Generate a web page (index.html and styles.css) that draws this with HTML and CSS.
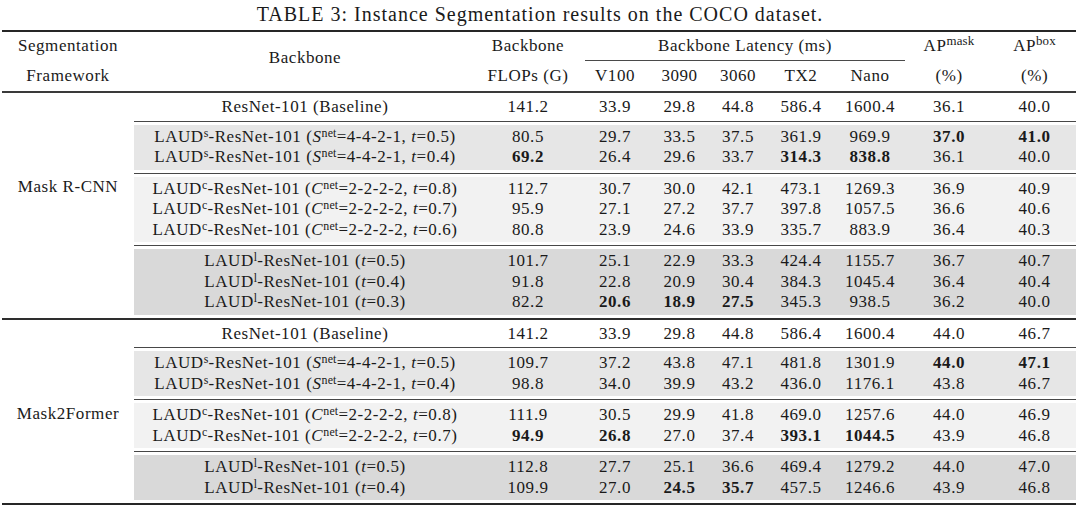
FILE: index.html
```html
<!DOCTYPE html>
<html lang="en">
<head>
<meta charset="utf-8">
<title>TABLE 3</title>
<link rel="stylesheet" href="styles.css">
</head>
<body>
<div class="caption">TABLE 3: Instance Segmentation results on the COCO dataset.</div>
<table class="results">
  <colgroup>
    <col class="c-fw"><col class="c-bb"><col class="c-fl"><col class="c-v100"><col class="c-3090"><col class="c-3060"><col class="c-tx2"><col class="c-nano"><col class="c-apm"><col class="c-apb">
  </colgroup>
  <thead>
    <tr class="h1">
      <th>Segmentation</th>
      <th rowspan="2" class="bb-head">Backbone</th>
      <th>Backbone</th>
      <th colspan="5" class="lat"><div class="cmid">Backbone Latency (ms)</div></th>
      <th>AP<sup>mask</sup></th>
      <th>AP<sup>box</sup></th>
    </tr>
    <tr class="h2">
      <th>Framework</th>
      <th>FLOPs (G)</th>
      <th>V100</th><th>3090</th><th>3060</th><th>TX2</th><th>Nano</th>
      <th>(%)</th><th>(%)</th>
    </tr>
  </thead>
  <tbody class="fw">
    <tr class="base">
      <td rowspan="13" class="fw-name">Mask R-CNN</td>
      <td>ResNet-101 (Baseline)</td><td>141.2</td><td>33.9</td><td>29.8</td><td>44.8</td><td>586.4</td><td>1600.4</td><td>36.1</td><td>40.0</td>
    </tr>
    <tr class="sep"><td colspan="9"></td></tr>
    <tr class="g-s first">
      <td>LAUD<sup>s</sup>-ResNet-101 (<i>S</i><sup>net</sup>=4-4-2-1, <i>t</i>=0.5)</td><td>80.5</td><td>29.7</td><td>33.5</td><td>37.5</td><td>361.9</td><td>969.9</td><td><b>37.0</b></td><td><b>41.0</b></td>
    </tr>
    <tr class="g-s last">
      <td>LAUD<sup>s</sup>-ResNet-101 (<i>S</i><sup>net</sup>=4-4-2-1, <i>t</i>=0.4)</td><td><b>69.2</b></td><td>26.4</td><td>29.6</td><td>33.7</td><td><b>314.3</b></td><td><b>838.8</b></td><td>36.1</td><td>40.0</td>
    </tr>
    <tr class="sep"><td colspan="9"></td></tr>
    <tr class="g-c first">
      <td>LAUD<sup>c</sup>-ResNet-101 (<i>C</i><sup>net</sup>=2-2-2-2, <i>t</i>=0.8)</td><td>112.7</td><td>30.7</td><td>30.0</td><td>42.1</td><td>473.1</td><td>1269.3</td><td>36.9</td><td>40.9</td>
    </tr>
    <tr class="g-c">
      <td>LAUD<sup>c</sup>-ResNet-101 (<i>C</i><sup>net</sup>=2-2-2-2, <i>t</i>=0.7)</td><td>95.9</td><td>27.1</td><td>27.2</td><td>37.7</td><td>397.8</td><td>1057.5</td><td>36.6</td><td>40.6</td>
    </tr>
    <tr class="g-c last">
      <td>LAUD<sup>c</sup>-ResNet-101 (<i>C</i><sup>net</sup>=2-2-2-2, <i>t</i>=0.6)</td><td>80.8</td><td>23.9</td><td>24.6</td><td>33.9</td><td>335.7</td><td>883.9</td><td>36.4</td><td>40.3</td>
    </tr>
    <tr class="sep"><td colspan="9"></td></tr>
    <tr class="g-l first">
      <td>LAUD<sup>l</sup>-ResNet-101 (<i>t</i>=0.5)</td><td>101.7</td><td>25.1</td><td>22.9</td><td>33.3</td><td>424.4</td><td>1155.7</td><td>36.7</td><td>40.7</td>
    </tr>
    <tr class="g-l">
      <td>LAUD<sup>l</sup>-ResNet-101 (<i>t</i>=0.4)</td><td>91.8</td><td>22.8</td><td>20.9</td><td>30.4</td><td>384.3</td><td>1045.4</td><td>36.4</td><td>40.4</td>
    </tr>
    <tr class="g-l last">
      <td>LAUD<sup>l</sup>-ResNet-101 (<i>t</i>=0.3)</td><td>82.2</td><td><b>20.6</b></td><td><b>18.9</b></td><td><b>27.5</b></td><td>345.3</td><td>938.5</td><td>36.2</td><td>40.0</td>
    </tr>
    <tr class="gap"><td colspan="9"></td></tr>
  </tbody>
  <tbody class="fw m2f">
    <tr class="base">
      <td rowspan="11" class="fw-name">Mask2Former</td>
      <td>ResNet-101 (Baseline)</td><td>141.2</td><td>33.9</td><td>29.8</td><td>44.8</td><td>586.4</td><td>1600.4</td><td>44.0</td><td>46.7</td>
    </tr>
    <tr class="sep"><td colspan="9"></td></tr>
    <tr class="g-s first">
      <td>LAUD<sup>s</sup>-ResNet-101 (<i>S</i><sup>net</sup>=4-4-2-1, <i>t</i>=0.5)</td><td>109.7</td><td>37.2</td><td>43.8</td><td>47.1</td><td>481.8</td><td>1301.9</td><td><b>44.0</b></td><td><b>47.1</b></td>
    </tr>
    <tr class="g-s last">
      <td>LAUD<sup>s</sup>-ResNet-101 (<i>S</i><sup>net</sup>=4-4-2-1, <i>t</i>=0.4)</td><td>98.8</td><td>34.0</td><td>39.9</td><td>43.2</td><td>436.0</td><td>1176.1</td><td>43.8</td><td>46.7</td>
    </tr>
    <tr class="sep"><td colspan="9"></td></tr>
    <tr class="g-c first">
      <td>LAUD<sup>c</sup>-ResNet-101 (<i>C</i><sup>net</sup>=2-2-2-2, <i>t</i>=0.8)</td><td>111.9</td><td>30.5</td><td>29.9</td><td>41.8</td><td>469.0</td><td>1257.6</td><td>44.0</td><td>46.9</td>
    </tr>
    <tr class="g-c last">
      <td>LAUD<sup>c</sup>-ResNet-101 (<i>C</i><sup>net</sup>=2-2-2-2, <i>t</i>=0.7)</td><td><b>94.9</b></td><td><b>26.8</b></td><td>27.0</td><td>37.4</td><td><b>393.1</b></td><td><b>1044.5</b></td><td>43.9</td><td>46.8</td>
    </tr>
    <tr class="sep"><td colspan="9"></td></tr>
    <tr class="g-l first">
      <td>LAUD<sup>l</sup>-ResNet-101 (<i>t</i>=0.5)</td><td>112.8</td><td>27.7</td><td>25.1</td><td>36.6</td><td>469.4</td><td>1279.2</td><td>44.0</td><td>47.0</td>
    </tr>
    <tr class="g-l last">
      <td>LAUD<sup>l</sup>-ResNet-101 (<i>t</i>=0.4)</td><td>109.9</td><td>27.0</td><td><b>24.5</b></td><td><b>35.7</b></td><td>457.5</td><td>1246.6</td><td>43.9</td><td>46.8</td>
    </tr>
    <tr class="gap"><td colspan="9"></td></tr>
  </tbody>
</table>
</body>
</html>
```
FILE: styles.css
```css
html, body {
  margin: 0;
  padding: 0;
  background: #ffffff;
}

body {
  width: 1080px;
  color: #1a1a1a;
  font-family: "Liberation Serif", "Times New Roman", serif;
}

.caption {
  height: 30px;
  line-height: 28px;
  text-align: center;
  font-size: 20px;
  letter-spacing: 1px;
}

.results {
  margin-left: 2px;
  width: 1074px;
  table-layout: fixed;
  border-collapse: collapse;
  border-top: 2px solid #262626;
  border-bottom: 2px solid #262626;
  font-size: 17px;
  letter-spacing: 0.55px;
}

.c-fw { width: 132px; }
.c-bb { width: 342px; }
.c-fl { width: 104px; }
.c-v100 { width: 70px; }
.c-3090 { width: 59px; }
.c-3060 { width: 58px; }
.c-tx2 { width: 68px; }
.c-nano { width: 70px; }
.c-apm { width: 88px; }
.c-apb { width: 83px; }

.results th,
.results td {
  padding: 0;
  text-align: center;
  vertical-align: middle;
  white-space: nowrap;
  font-weight: normal;
  line-height: 20.5px;
}

.results b { font-weight: bold; }

.results sup {
  font-size: 0.7em;
  line-height: 0;
  vertical-align: 0.42em;
  letter-spacing: 0.2px;
}

.results th sup {
  font-size: 0.76em;
  vertical-align: 0.45em;
}

thead {
  border-bottom: 2px solid #3a3a3a;
}

.h1 th { height: 29px; }
.h2 th { height: 30px; }

.results th.bb-head { padding-bottom: 6px; }

.results th.lat { vertical-align: bottom; }

.cmid {
  line-height: 28px;
  border-bottom: 1px solid #4a4a4a;
  margin: 0 0 0 5px;
}

.m2f { border-top: 2px solid #2e2e2e; }

.results td.fw-name {
  vertical-align: top;
  padding-top: 84px;
}

.base td { padding-top: 4px; }

.sep td {
  height: 7px;
  line-height: 0;
  font-size: 0;
  background: linear-gradient(#474747, #474747) no-repeat 0 3px / 100% 1px;
}

.gap td {
  height: 3px;
  line-height: 0;
  font-size: 0;
}

.g-s td { background: #e6e6e6; }
.g-c td { background: #f2f2f2; }
.g-l td { background: #d9d9d9; }

.first td { padding-top: 2px; }
.last td { padding-bottom: 2px; }
```
